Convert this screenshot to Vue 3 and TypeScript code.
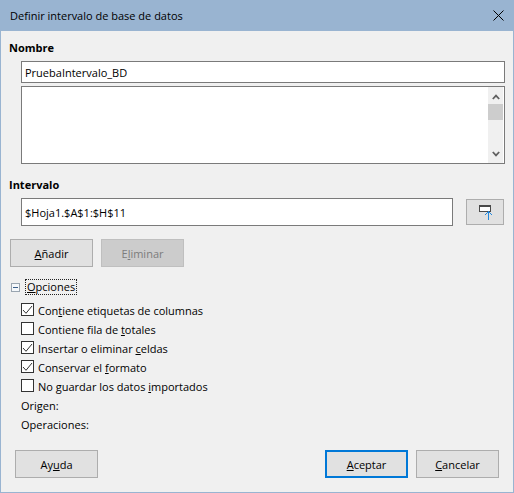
<script setup lang="ts">
interface Opt { pre: string; key: string; post: string; checked: boolean }
const options: Opt[] = [
  { pre: 'Con', key: 't', post: 'iene etiquetas de columnas', checked: true },
  { pre: 'Contiene fila de ', key: 't', post: 'otales', checked: false },
  { pre: 'Insertar o eliminar ', key: 'c', post: 'eldas', checked: true },
  { pre: 'Conservar el ', key: 'f', post: 'ormato', checked: true },
  { pre: 'No guardar los datos ', key: 'i', post: 'mportados', checked: false },
]
</script>

<template>
  <div class="win">
    <header class="title">
      <span>Definir intervalo de base de datos</span>
      <svg class="close" width="11" height="11" viewBox="0 0 11 11"><path d="M0.5 0.5L10.5 10.5M10.5 0.5L0.5 10.5" stroke="#000" fill="none" /></svg>
    </header>
    <main class="body">
      <h2 class="head first">Nombre</h2>
      <div class="indent-name">
        <div class="field name">PruebaIntervalo_BD</div>
        <div class="list">
          <div class="scroll">
            <svg width="8" height="6" viewBox="0 0 8 6"><path d="M0.8 5L4 1.6L7.2 5" stroke="#606060" stroke-width="1.8" fill="none" /></svg>
            <div class="thumb"></div>
            <div class="grow"></div>
            <svg width="8" height="6" viewBox="0 0 8 6"><path d="M0.8 1L4 4.4L7.2 1" stroke="#606060" stroke-width="1.8" fill="none" /></svg>
          </div>
        </div>
      </div>
      <h2 class="head second">Intervalo</h2>
      <div class="range-row">
        <div class="field range">$Hoja1.$A$1:$H$11</div>
        <button class="btn pick">
          <svg class="pick-icon" width="16" height="18" viewBox="0 0 16 18" shape-rendering="crispEdges">
            <rect x="2.5" y="2.5" width="11" height="6" fill="#fff" stroke="#4a4a4a" />
            <rect x="2" y="2" width="12" height="2" fill="#4a4a4a" />
            <rect x="11" y="8" width="1" height="9" fill="#2288dd" />
            <rect x="10" y="9" width="1" height="1" fill="#2288dd" />
            <rect x="12" y="9" width="1" height="1" fill="#2288dd" />
            <rect x="9" y="10" width="1" height="1" fill="#2288dd" />
            <rect x="13" y="10" width="1" height="1" fill="#2288dd" />
            <rect x="8" y="11" width="1" height="1" fill="#2288dd" />
            <rect x="14" y="11" width="1" height="1" fill="#2288dd" />
          </svg>
        </button>
      </div>
      <div class="actions">
        <button class="btn wide"><span><u>A</u>ñadir</span></button>
        <button class="btn wide disabled"><span>E<u>l</u>iminar</span></button>
      </div>
      <div class="expander">
        <svg width="9" height="9" viewBox="0 0 9 9"><rect x="0.5" y="0.5" width="8" height="8" fill="#f5f8fb" stroke="#9aa5b0" /><path d="M2 4.5H7" stroke="#3a5f8a" /></svg>
        <span class="focus"><u>O</u>pciones</span>
      </div>
      <ul class="opts">
        <li v-for="o in options" :key="o.pre" class="opt">
          <span class="box">
            <svg v-if="o.checked" width="11" height="10" viewBox="0 0 11 10"><path d="M1 5L4 8.3L10 1" stroke="#333" fill="none" /></svg>
          </span>
          <span class="label">{{ o.pre }}<u>{{ o.key }}</u>{{ o.post }}</span>
        </li>
      </ul>
      <div class="meta first-meta">Origen:</div>
      <div class="meta">Operaciones:</div>
      <footer class="foot">
        <button class="btn wide"><span>Ay<u>u</u>da</span></button>
        <div class="spacer"></div>
        <button class="btn wide primary"><span><u>A</u>ceptar</span></button>
        <button class="btn wide"><span><u>C</u>ancelar</span></button>
      </footer>
    </main>
  </div>
</template>

<style>
html, body { margin: 0; padding: 0; background: #f0f0f0; }
</style>

<style scoped>
.win {
  width: 514px;
  height: 493px;
  box-sizing: border-box;
  display: flex;
  flex-direction: column;
  border: 1px solid #99b4d1;
  border-top: 0;
  background: #f0f0f0;
  color: #000;
  font-family: "Open Sans", "Noto Sans", sans-serif;
  font-size: 11px;
  overflow: hidden;
}
.title {
  margin: 0 -1px;
  height: 31px;
  flex: none;
  background: #99b4d1;
  display: flex;
  align-items: center;
  justify-content: space-between;
  padding: 0 10px 0 10px;
  color: #000;
}
.body { flex: 1; display: flex; flex-direction: column; padding: 0 9px 0 8px; }
.head { margin: 0; font-size: 11px; font-weight: 700; line-height: 16px; color: #000; }
.first { margin-top: 9px; }
.second { margin-top: 13px; }
.indent-name { margin: 5px 0 0 12px; display: flex; flex-direction: column; gap: 3px; }
.field {
  box-sizing: border-box;
  background: #fff;
  border: 1px solid #7a7a7a;
  padding-left: 3px;
  display: flex;
  align-items: center;
}
.name { height: 22px; width: 484px; }
.list {
  box-sizing: border-box;
  width: 484px;
  height: 78px;
  background: #fff;
  border: 1px solid #7a7a7a;
  display: flex;
  justify-content: flex-end;
}
.scroll {
  width: 15px;
  margin-right: 1px;
  background: #f0f0f0;
  display: flex;
  flex-direction: column;
  align-items: center;
  padding: 7px 0 6px;
  box-sizing: border-box;
}
.thumb { width: 15px; height: 16px; background: #cdcdcd; margin-top: 4px; }
.grow { flex: 1; }
.range-row { display: flex; align-items: center; margin: 5px 0 0 12px; }
.range { width: 432px; height: 28px; }
.btn {
  box-sizing: border-box;
  background: #e1e1e1;
  border: 1px solid #adadad;
  padding: 0;
  font: inherit;
  color: #000;
  display: flex;
  align-items: center;
  justify-content: center;
}
.pick { width: 38px; height: 26px; margin-left: 13px; }
.pick-icon { display: block; }
.actions { display: flex; gap: 8px; margin: 13px 0 0 1px; }
.wide { width: 83px; height: 28px; }
.disabled { background: #cccccc; border-color: #bfbfbf; color: #7c7c7c; }
.expander { display: flex; align-items: center; margin: 12px 0 0 2px; gap: 6px; height: 16px; }
.focus { outline: 1px dotted #222; padding: 0 1px; line-height: 14px; }
.opts { list-style: none; margin: 5px 0 0 12px; padding: 0; }
.opt { display: flex; align-items: center; gap: 4px; height: 19px; }
.label { padding-top: 2px; }
.box {
  box-sizing: border-box;
  width: 13px;
  height: 13px;
  background: #fff;
  border: 1px solid #333;
  display: flex;
  align-items: center;
  justify-content: center;
}
.meta { margin-left: 12px; height: 19px; line-height: 19px; }
.first-meta { margin-top: 1px; }
.foot { display: flex; gap: 8px; margin: 16px 5px 0 6px; }
.spacer { flex: 1; }
.primary { border: 2px solid #0078d7; }
</style>
